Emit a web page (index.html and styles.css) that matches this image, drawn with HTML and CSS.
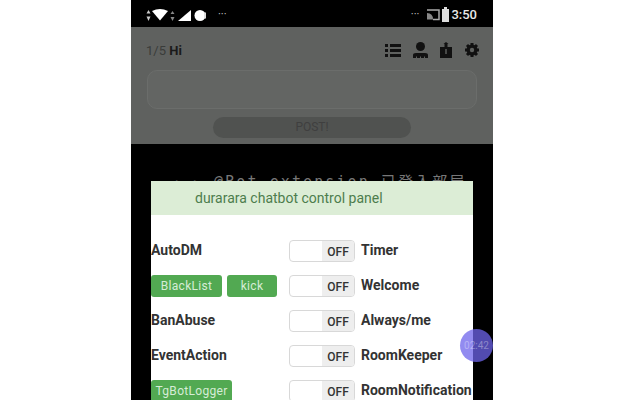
FILE: index.html
```html
<!DOCTYPE html>
<html lang="en">
<head>
  <meta charset="UTF-8">
  <title>durarara chatbot control panel</title>
  <link rel="stylesheet" href="styles.css">
</head>
<body>
  <div class="phone">
    <div class="status-bar">
      <div class="status-left">
        <svg width="60" height="14" viewBox="0 0 60 14">
          <path d="M2.500 2 4.500 5.500H.5ZM2.500 13 .5 8.500h4Z" fill="#ccc"/>
          <path d="M6 3Q14-1 22 3L14 12.500Z" fill="#fff"/>
          <path d="M26.500 3 28.500 6H24.500ZM26.500 13 24.500 9h4Z" fill="#888"/>
          <path d="M45 2V13H32Z" fill="#fff"/>
          <circle cx="54" cy="7.500" r="5.500" fill="#fff"/>
          <path d="M58 4.500h2v6h-2Z" fill="#ddd"/>
        </svg>
        <span class="dots">···</span>
      </div>
      <div class="status-right">
        <span class="dots">···</span>
        <svg width="14" height="12" viewBox="0 0 14 12">
          <path d="M1 1H13V10.500H7" fill="none" stroke="#aaa" stroke-width="1.500"/>
          <path d="M1 4Q7 4 7 10.500H1Z" fill="#888"/>
        </svg>
        <svg width="7" height="15" viewBox="0 0 7 15">
          <path d="M2 0H5V2H7V15H0V2H2Z" fill="#ddd"/>
        </svg>
        <span class="clock">3:50</span>
      </div>
    </div>

    <div class="post-area">
      <div class="post-top">
        <div class="room-count">1/5 <b>Hi</b></div>
        <div class="tools">
          <svg width="16" height="13" viewBox="0 0 16 13">
            <path d="M0 0H3V3H0ZM5 0H16V3H5ZM0 5H3V8H0ZM5 5H16V8H5ZM0 10H3V13H0ZM5 10H16V13H5Z" fill="#111"/>
          </svg>
          <svg width="15" height="16" viewBox="0 0 15 16">
            <circle cx="7.500" cy="4.500" r="4.500" fill="#111"/>
            <path d="M0 16V13Q0 11 3 11H12Q15 11 15 13V16H12V14.500H11V16H8V14.500H7V16H4V14.500H3V16Z" fill="#111"/>
          </svg>
          <svg width="12" height="16" viewBox="0 0 12 16">
            <path d="M0 5H4.500V2H3.500L6 0 8.500 2H7.500V5H12V16H0Z" fill="#111"/>
            <path d="M5.300 7H6.700V12H5.300Z" fill="#5f615f"/>
          </svg>
          <svg width="16" height="16" viewBox="0 0 16 16">
            <path d="M8 1V15M1 8H15M3 3 13 13M13 3 3 13" stroke="#111" stroke-width="3"/>
            <circle cx="8" cy="8" r="5.500" fill="#111"/>
            <circle cx="8" cy="8" r="2.200" fill="#5f615f"/>
          </svg>
        </div>
      </div>
      <div class="post-box"></div>
      <div class="post-button">POST!</div>
    </div>

    <div class="talks">
      <div class="talk-line"><span class="talk-arrows">► ►</span>@Bot extension 已登入部屋</div>
    </div>

    <div class="panel">
      <div class="panel-title">durarara chatbot control panel</div>
      <div class="panel-rows">
        <div class="row">
          <div class="row-left"><span class="label">AutoDM</span></div>
          <div class="switch"><span class="switch-off">OFF</span></div>
          <span class="label">Timer</span>
        </div>
        <div class="row">
          <div class="row-left">
            <span class="green-btn wide">BlackList</span>
            <span class="green-btn small">kick</span>
          </div>
          <div class="switch"><span class="switch-off">OFF</span></div>
          <span class="label">Welcome</span>
        </div>
        <div class="row">
          <div class="row-left"><span class="label">BanAbuse</span></div>
          <div class="switch"><span class="switch-off">OFF</span></div>
          <span class="label">Always/me</span>
        </div>
        <div class="row">
          <div class="row-left"><span class="label">EventAction</span></div>
          <div class="switch"><span class="switch-off">OFF</span></div>
          <span class="label">RoomKeeper</span>
        </div>
        <div class="row">
          <div class="row-left"><span class="green-btn logger">TgBotLogger</span></div>
          <div class="switch"><span class="switch-off">OFF</span></div>
          <span class="label">RoomNotification</span>
        </div>
      </div>
    </div>

    <div class="timer-bubble">02:42</div>
  </div>
</body>
</html>
```

FILE: styles.css
```css
body {
  margin: 0;
  padding: 0 0 0 131px;
  height: 400px;
  overflow: hidden;
  background: #fff;
  font-family: "Roboto", "Noto Sans CJK JP", sans-serif;
}

.phone {
  position: relative;
  width: 362px;
  height: 400px;
  overflow: hidden;
  background: #000;
}

.status-bar {
  height: 27px;
  padding: 2px 16px 0 15px;
  box-sizing: border-box;
  display: flex;
  justify-content: space-between;
  align-items: center;
  color: #fff;
}

.status-left, .status-right {
  display: flex;
  align-items: center;
  gap: 2px;
}

.status-left .dots {
  margin-left: 10px;
}

.status-right .dots {
  margin-right: 5px;
}

.dots {
  font-size: 11px;
  color: #ccc;
}

.clock {
  font-size: 13px;
  font-weight: 500;
  color: #e8e8e8;
}

.post-area {
  height: 117px;
  box-sizing: border-box;
  padding: 0 16px;
  background: #5f615f;
}

.post-top {
  height: 43px;
  box-sizing: border-box;
  padding-top: 3px;
  display: flex;
  justify-content: space-between;
  align-items: center;
}

.room-count {
  font-size: 13px;
  color: #3a3c3a;
  margin-left: -1px;
}

.room-count b {
  color: #1a1a1a;
}

.tools {
  display: flex;
  align-items: center;
  gap: 12px;
  margin-right: -3px;
}

.post-box {
  height: 39px;
  box-sizing: border-box;
  border: 1px solid #6b6d6b;
  border-radius: 10px;
  background: #636563;
}

.post-button {
  width: 198px;
  height: 21px;
  margin: 8px auto 0;
  border-radius: 11px;
  background: #505250;
  color: #3f3f3f;
  font-size: 12px;
  line-height: 21px;
  text-align: center;
}

.talks {
  padding: 26px 0 0 45px;
}

.talk-line {
  font-family: "DejaVu Sans Mono", "Noto Sans CJK JP", monospace;
  font-size: 15px;
  letter-spacing: 2.100px;
  color: #777;
  white-space: nowrap;
}

.talk-arrows {
  display: inline-block;
  width: 38px;
  letter-spacing: 0;
}

.panel {
  position: absolute;
  left: 20px;
  top: 181px;
  width: 322px;
  height: 240px;
  background: #fff;
}

.panel-title {
  height: 34px;
  padding-left: 44px;
  background: #dcedd6;
  color: #4d7d4d;
  font-size: 14px;
  line-height: 34px;
}

.panel-rows {
  padding-top: 25px;
  display: flex;
  flex-direction: column;
  gap: 13px;
}

.row {
  height: 22px;
  display: flex;
  align-items: center;
}

.row-left {
  width: 138px;
  display: flex;
  gap: 5px;
}

.label {
  margin-bottom: 2px;
  font-size: 14px;
  font-weight: 700;
  color: #333;
  white-space: nowrap;
}

.switch {
  width: 66px;
  height: 22px;
  box-sizing: border-box;
  margin-right: 6px;
  border: 1px solid #d8d8d8;
  border-radius: 4px;
  display: flex;
  justify-content: flex-end;
}

.switch-off {
  width: 32px;
  background: #eee;
  color: #333;
  font-size: 12px;
  font-weight: 500;
  line-height: 22px;
  text-align: center;
  border-radius: 0 3px 3px 0;
}

.green-btn {
  height: 22px;
  border-radius: 3px;
  background: #52a952;
  color: #d6ecd6;
  font-size: 12px;
  letter-spacing: 0.3px;
  line-height: 23px;
  text-align: center;
}

.wide {
  width: 71px;
}

.small {
  width: 50px;
}

.logger {
  width: 81px;
}

.timer-bubble {
  position: absolute;
  left: 329px;
  top: 329px;
  width: 33px;
  height: 33px;
  border-radius: 50%;
  background: rgba(110, 100, 235, 0.75);
  color: rgba(255, 255, 255, 0.35);
  font-size: 10px;
  line-height: 33px;
  text-align: center;
}
```
